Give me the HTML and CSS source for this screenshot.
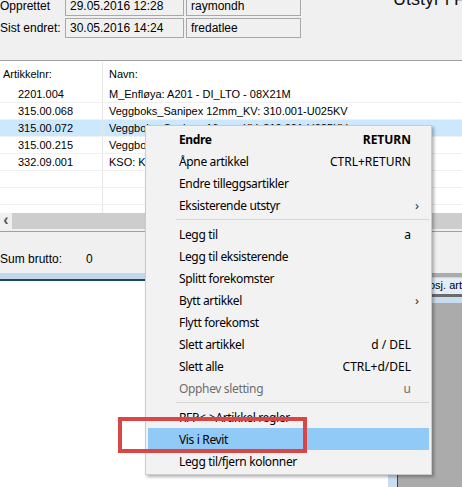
FILE: index.html
```html
<!DOCTYPE html>
<html>
<head>
<meta charset="utf-8">
<link rel="stylesheet" href="styles.css">
</head>
<body>
<div class="screen">
  <div class="header">
    <div class="fields">
      <div class="frow"><span class="lbl">Opprettet</span><span class="box b1">29.05.2016 12:28</span><span class="box b2">raymondh</span></div>
      <div class="frow"><span class="lbl">Sist endret:</span><span class="box b1">30.05.2016 14:24</span><span class="box b2">fredatlee</span></div>
    </div>
    <div class="title">Utstyr i Prosjekt</div>
  </div>
  <div class="grid">
    <div class="grow ghead"><div class="c1 hc1">Artikkelnr:</div><div class="c2">Navn:</div></div>
    <div class="grow"><div class="c1">2201.004</div><div class="c2">M_Enfløya: A201 - DI_LTO - 08X21M</div></div>
    <div class="grow"><div class="c1">315.00.068</div><div class="c2">Veggboks_Sanipex 12mm_KV: 310.001-U025KV</div></div>
    <div class="grow sel"><div class="c1">315.00.072</div><div class="c2">Veggboks_Sanipex 16mm_KV: 310.001-U025KV</div></div>
    <div class="grow"><div class="c1">315.00.215</div><div class="c2">Veggboks_Sanipex 20mm_KV: 310.002-U025KV</div></div>
    <div class="grow"><div class="c1">332.09.001</div><div class="c2">KSO: Kuleventil 15mm</div></div>
    <div class="grow"><div class="c1"></div><div class="c2"></div></div>
    <div class="grow"><div class="c1"></div><div class="c2"></div></div>
    <div class="grow part"><div class="c1"></div><div class="c2"></div></div>
  </div>
  <div class="hscroll"><span class="sarrow">&lsaquo;</span><div class="thumb"></div></div>
  <div class="gap"></div>
  <div class="sum"><span class="sumlbl">Sum brutto:</span><span class="sumval">0</span></div>
  <div class="lower">
    <div class="leftpanel"></div>
    <div class="splitter"></div>
    <div class="rightpanel">
      <div class="tab">Prosj. art</div>
      <div class="tabline"></div>
      <div class="tabblue"></div>
      <div class="mdi"></div>
    </div>
  </div>

  <div class="menu">
    <div class="mi bold"><span class="ml">Endre</span><span class="ms">RETURN</span><span class="ma"></span></div>
    <div class="mi"><span class="ml">Åpne artikkel</span><span class="ms">CTRL+RETURN</span><span class="ma"></span></div>
    <div class="mi"><span class="ml">Endre tilleggsartikler</span><span class="ms"></span><span class="ma"></span></div>
    <div class="mi"><span class="ml">Eksisterende utstyr</span><span class="ms"></span><span class="ma">&rsaquo;</span></div>
    <div class="msep"></div>
    <div class="mi"><span class="ml">Legg til</span><span class="ms">a</span><span class="ma"></span></div>
    <div class="mi"><span class="ml">Legg til eksisterende</span><span class="ms"></span><span class="ma"></span></div>
    <div class="mi"><span class="ml">Splitt forekomster</span><span class="ms"></span><span class="ma"></span></div>
    <div class="mi"><span class="ml">Bytt artikkel</span><span class="ms"></span><span class="ma">&rsaquo;</span></div>
    <div class="mi"><span class="ml">Flytt forekomst</span><span class="ms"></span><span class="ma"></span></div>
    <div class="mi"><span class="ml">Slett artikkel</span><span class="ms">d / DEL</span><span class="ma"></span></div>
    <div class="mi"><span class="ml">Slett alle</span><span class="ms">CTRL+d/DEL</span><span class="ma"></span></div>
    <div class="mi dis"><span class="ml">Opphev sletting</span><span class="ms">u</span><span class="ma"></span></div>
    <div class="msep sep2"></div>
    <div class="mi"><span class="ml">RFP&lt;-&gt;Artikkel regler</span><span class="ms"></span><span class="ma"></span></div>
    <div class="mi hi"><span class="ml">Vis i Revit</span><span class="ms"></span><span class="ma"></span></div>
    <div class="mi"><span class="ml">Legg til/fjern kolonner</span><span class="ms"></span><span class="ma"></span></div>
  </div>
  <div class="redbox"></div>
</div>
</body>
</html>
```

FILE: styles.css
```css
html, body {
  margin: 0;
  padding: 0;
}
body {
  width: 462px;
  height: 487px;
  overflow: hidden;
  background: #fff;
  font-family: "Liberation Sans", Arial, sans-serif;
  font-size: 11px;
  color: #000;
}
.screen {
  position: relative;
  width: 462px;
  height: 487px;
  overflow: hidden;
}
.header {
  height: 60px;
  background: #f0f0f0;
  border-bottom: 1px solid #a0a0a0;
  display: flex;
  overflow: hidden;
}
.fields {
  display: flex;
  flex-direction: column;
  gap: 2px;
  margin-top: -4px;
}
.frow {
  display: flex;
  align-items: center;
  height: 20px;
}
.lbl {
  width: 65px;
  font-size: 12px;
}
.box {
  box-sizing: border-box;
  height: 20px;
  border: 1px solid #a8a8a8;
  background: #f0f0f0;
  padding: 2px 0 0 4px;
  font-size: 12px;
  line-height: 15px;
  white-space: nowrap;
  overflow: hidden;
}
.b1 { width: 119px; margin-right: 2px; }
.b2 { width: 115px; }
.title {
  margin-left: 92px;
  margin-top: -11px;
  font-size: 18px;
  white-space: nowrap;
  color: #111;
}
.grid {
  height: 152px;
  overflow: hidden;
  background: #fff;
}
.grow {
  display: flex;
  height: 17px;
  box-sizing: border-box;
  border-bottom: 1px solid #f0f0f0;
  align-items: center;
  white-space: nowrap;
}
.ghead {
  height: 25px;
  border-bottom: none;
  padding-top: 1px;
}
.c1 {
  width: 103px;
  box-sizing: border-box;
  padding-left: 18px;
  align-self: stretch;
  display: flex;
  align-items: center;
  border-right: 1px solid #e6e6e6;
}
.hc1 { padding-left: 3px; }
.c2 {
  padding-left: 6px;
  flex: 1;
}
.sel { background: #cce8ff; }
.part { height: 8px; border-bottom: none; }
.hscroll {
  height: 16px;
  display: flex;
  background: #cdcdcd;
}
.sarrow {
  width: 12px;
  background: #f0f0f0;
  font-size: 16px;
  line-height: 14px;
  text-align: center;
  color: #555;
  font-weight: bold;
}
.thumb { flex: 1; background: #cdcdcd; }
.gap { height: 2px; background: #f0f0f0; }
.sum {
  height: 42px;
  box-sizing: border-box;
  background: #f0f0f0;
  border-top: 1px solid #a0a0a0;
  display: flex;
  align-items: center;
  padding-top: 12px;
  font-size: 12px;
}
.sumlbl { width: 86px; }
.lower {
  display: flex;
  height: 214px;
}
.leftpanel {
  width: 400px;
  border-top: 6px solid #c2d6ee;
  box-shadow: inset 0 2px 0 #1d4b53;
  background: #fff;
}
.splitter {
  width: 9px;
  background: #c9def2;
  border-right: 1px solid #444;
}
.rightpanel {
  flex: 1;
  display: flex;
  flex-direction: column;
  background: #ababab;
}
.tab {
  height: 16px;
  margin-top: 4px;
  padding-left: 20px;
  background: #e3edf8;
  border-top: 1px solid #c2d6ee;
  font-size: 11px;
  line-height: 14px;
  white-space: nowrap;
  overflow: hidden;
}
.tabline { height: 3px; background: #6b6b6b; }
.tabblue { height: 6px; background: #c8dcf0; }
.mdi { flex: 1; background: #ababab; }

.menu {
  position: absolute;
  left: 145px;
  top: 125px;
  width: 287px;
  box-sizing: border-box;
  background: #f2f2f2;
  border: 1px solid #cccccc;
  padding: 2px;
  box-shadow: 2px 2px 3px rgba(0,0,0,0.3);
  font-family: "Noto Sans", sans-serif;
  font-size: 12px;
  z-index: 2;
}
.mi {
  height: 22px;
  display: flex;
  align-items: center;
  padding-left: 31px;
  padding-right: 6px;
  white-space: nowrap;
}
.ml { flex: 1; letter-spacing: -0.35px; }
.ms { text-align: right; }
.ma {
  width: 12px;
  text-align: center;
  font-size: 13px;
  color: #333;
}
.bold { font-weight: bold; }
.dis { color: #6d6d6d; }
.hi { background: #91c9f7; }
.msep {
  height: 7px;
  margin-left: 28px;
  background: linear-gradient(#d7d7d7, #d7d7d7) no-repeat 0 3px / 100% 1px;
}
.redbox {
  position: absolute;
  left: 118px;
  top: 417px;
  width: 189px;
  height: 36px;
  box-sizing: border-box;
  border: 4px solid #d94646;
  z-index: 3;
}
```
